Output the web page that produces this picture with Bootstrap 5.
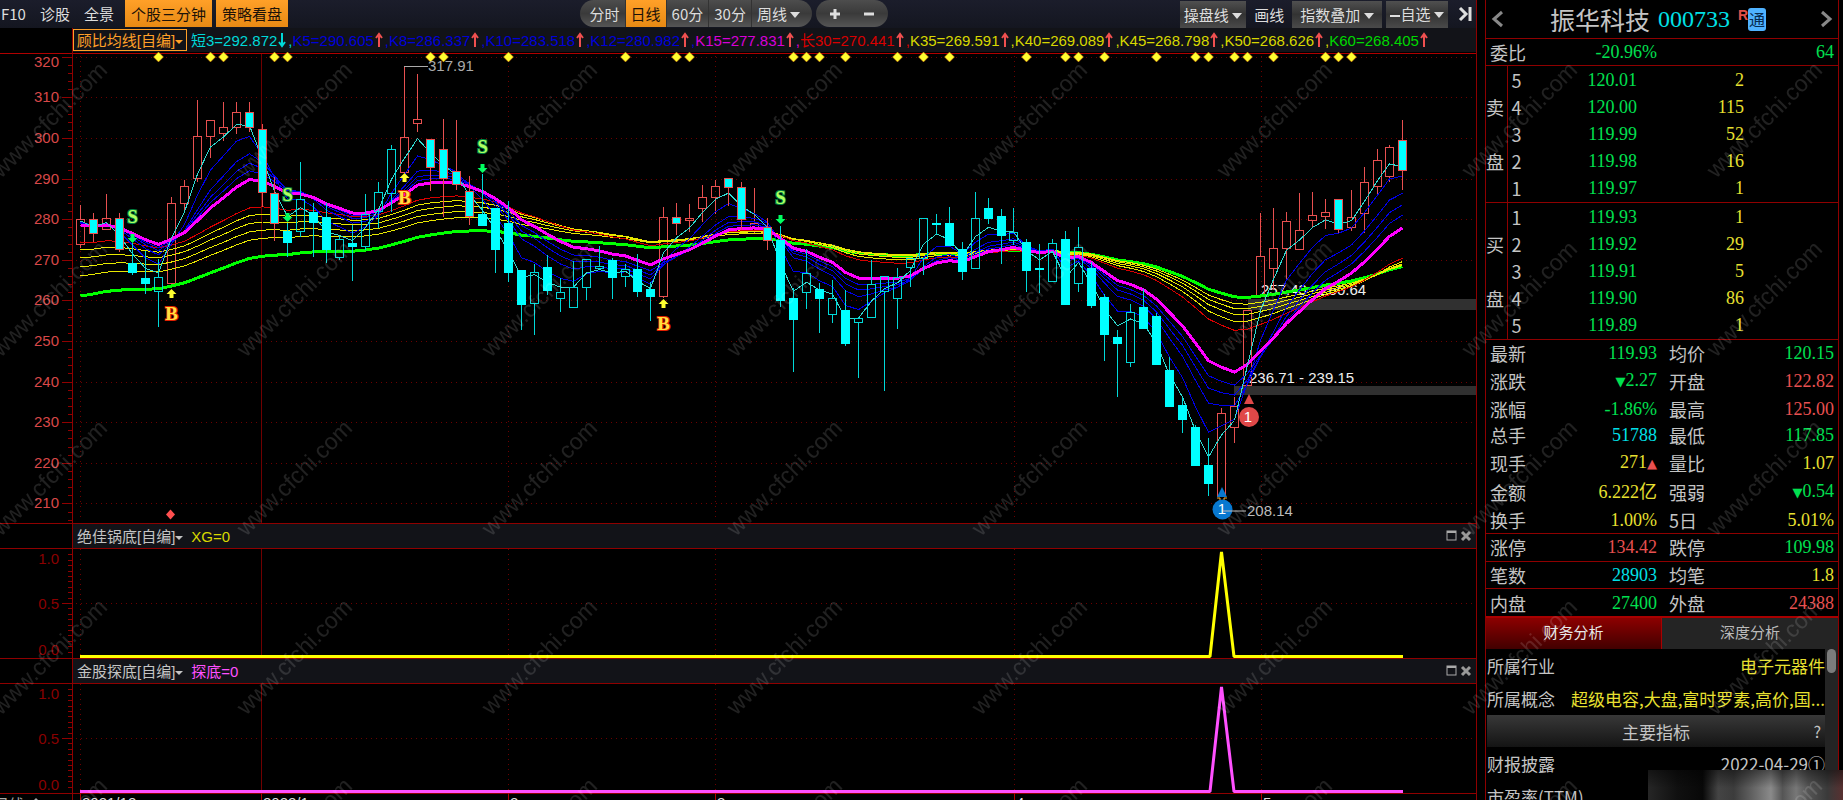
<!DOCTYPE html>
<html lang="zh-CN">
<head>
<meta charset="utf-8">
<meta name="viewport" content="width=device-width, initial-scale=1">
<title>振华科技 000733</title>
<link rel="stylesheet" href="https://cdn.jsdelivr.net/npm/bootstrap@5.3.0/dist/css/bootstrap.min.css">
<style>
:root{--line:#8f0000;--up:#e85050;--down:#00e050;--yel:#e8e030;--cy:#00e0e8;--txt:#c4c4c4}
body{background:#000;color:var(--txt);font-family:"Liberation Sans","Noto Sans CJK SC",sans-serif;font-size:15px;line-height:1;height:100vh;overflow:hidden}
button{font:inherit;line-height:1;color:inherit;background:none;border:0;padding:0;white-space:nowrap}
.toolbar{height:28px;background:linear-gradient(#1b1d2b,#141620);font-family:"Noto Sans CJK SC",sans-serif;color:#ddd}
.toolbar button{height:27px}
.hot{background:linear-gradient(#ffa028,#e88a14)!important;color:#1c1208}
.left-tools button{padding:0 7px}
.left-tools button:first-child{padding-left:1px}
.left-tools .hot{padding:0 6px}
.pill{background:linear-gradient(#4d4d4d,#3a3a3a 50%,#555);border-radius:14px;height:27px;overflow:hidden}
.pill button{padding:0 5px;border-right:1px solid #333}
.pill button:first-child{padding-left:10px}
.pill button:last-child{border:0;padding-right:12px}
.pill .step{padding:0 10px;border:0;line-height:0}
.pill .step:last-child{padding-right:12px}
.pill .step:first-child{padding-left:12px}
.grey{background:linear-gradient(#505050,#333 50%,#4a4a4a)}
.caret{display:inline-block;border:5px solid transparent;border-top:6px solid #ddd;border-bottom:0;vertical-align:2px}
.caret.sm{border-width:4px 4px 0;border-top-color:currentColor}
.axis-gap{width:73px;flex:none;border-right:1px solid var(--line)}
.legend-bar{height:24px}
.legend-strip{background:#121318;white-space:nowrap;overflow:hidden}
.formula{height:22px;width:114px;border:1px solid #ffa028!important;color:#ffa028}
.ar{width:11px;height:16px;flex:none}
.sub-bar{height:26px;border-top:1px solid var(--line);border-bottom:1px solid var(--line)}
.sub-strip{background:#121318}
.xg{color:#d8d800}.td{color:#ff50ff}
svg{display:block}
.chart{width:100%;height:auto}
.chart text{font-size:15px}
.chart .sig{font:700 19px "Liberation Serif",serif}
.chart polyline{shape-rendering:crispEdges}
.left-pane{border-right:1px solid var(--line);min-width:0;overflow:hidden}
.left-pane>*{flex-shrink:0}
.quote{width:358px;flex:none;padding-right:4px}
.quote-box{border:1px solid var(--line);border-width:0 1px;font-family:"Noto Sans CJK SC",sans-serif;font-size:18px;height:100%}
.quote-box>*{flex-shrink:0}
.quote-box>.more{flex:1 1 0}
.title-row{height:39px;border-bottom:1px solid var(--line)}
.stock-name{font-size:25px;line-height:1}
.num{font-family:"Liberation Serif",serif;font-size:18px}
.wb-row{height:27px;border-bottom:1px solid var(--line)}
.wb-left{width:167px}
.q{width:100%;border-collapse:collapse}
.q td,.q th{padding:0;line-height:18px;font-weight:400;white-space:nowrap}
.q .rule{border-top:1px solid var(--line)}
.book{height:137px;border-bottom:1px solid var(--line)}
.book .side{width:21px;border-right:1px solid var(--line)}
.book .lv{padding-left:4px}
.book .price{width:110px}.book .vol{width:107px}.book .rest{width:94px}
.stats{height:276px}
.stats .k1{width:60px}.stats .v1{width:111px}.stats .k2{padding-left:12px}
.up{color:var(--up)}.down{color:var(--down)}.yel{color:var(--yel)}.cy{color:var(--cy)}
.tri{font-size:13px;font-family:"DejaVu Sans",sans-serif}
.tabs{border-top:2px solid #a80000;height:33px;font-size:15px}
.tabs button{padding-bottom:4px}
.tabs .on{background:linear-gradient(#8c0000,#420000);color:#e8e8e8;border-right:1px solid #a80000}
.tabs .off{background:#242424;color:#bbb}
.info{font-size:17px;padding-left:1px}
.info .line{height:33px}
.info .band{height:32px;background:linear-gradient(#383838,#141414)}
.bar-track{width:13px;background:#242424}
.bar-thumb{width:9px;height:24px;border-radius:5px;background:#7c7c7c}
.rbadge{color:#e05048;font:700 14px "Liberation Sans",sans-serif}
.tong{width:18px;height:23px;border-radius:3px;background:#4fb2ff;color:#062a50;font-size:16px;line-height:22px}
.smudge{right:0;bottom:0;width:195px;height:30px;background:linear-gradient(rgba(0,0,0,.45),rgba(0,0,0,0) 60%),linear-gradient(90deg,#262626,#101010 15%,#080808 28%,#444 36%,#3c3c3c 44%,#5c5c5c 52%,#8a8a8a 63%,#555 69%,#777 76%,#555 82%,#3a3a3a 92%,#583030)}
.wm{inset:0;pointer-events:none}
</style>
</head>
<body>
<div class="d-flex h-100 position-relative">
<main class="left-pane flex-fill d-flex flex-column">
  <nav class="toolbar d-flex justify-content-between">
    <div class="left-tools d-flex">
      <button>F10</button><button>诊股</button><button>全景</button>
      <button class="hot ms-1 me-1">个股三分钟</button><button class="hot">策略看盘</button>
    </div>
    <div class="d-flex gap-1">
      <div class="pill d-flex"><button>分时</button><button class="hot">日线</button><button>60分</button><button>30分</button><button>周线 <span class="caret"></span></button></div>
      <div class="pill d-flex align-items-center justify-content-center">
        <button class="step" aria-label="放大"><svg width="14" height="14"><path d="M7 2v10M2 7h10" stroke="#ddd" stroke-width="3"/></svg></button>
        <button class="step" aria-label="缩小"><svg width="14" height="14"><path d="M2 7h10" stroke="#ddd" stroke-width="3"/></svg></button>
      </div>
    </div>
    <div class="d-flex align-items-center">
      <button class="grey px-1">操盘线 <span class="caret"></span></button>
      <button class="px-2">画线</button>
      <button class="grey px-2">指数叠加 <span class="caret"></span></button>
      <button class="grey px-1 ms-1 me-2"><svg class="d-inline-block" width="11" height="12"><path d="M0 6h10" stroke="#ddd" stroke-width="2"/></svg>自选 <span class="caret"></span></button>
      <svg width="20" height="18"><path d="M4 3l6 6-6 6M14 2v14" fill="none" stroke="#ddd" stroke-width="3"/></svg>
    </div>
  </nav>
  <div class="legend-bar d-flex">
    <div class="axis-gap"></div>
    <div class="legend-strip flex-fill d-flex align-items-center" id="legend"><button class="formula me-1">顾比均线[自编]<span class="caret sm"></span></button></div>
  </div>
  <svg class="chart" id="main" viewBox="0 52 1476 471"></svg>
  <div class="sub-bar d-flex">
    <div class="axis-gap"></div>
    <div class="sub-strip flex-fill d-flex align-items-center px-1"><button>绝佳锅底[自编]<span class="caret sm"></span></button><span class="ms-2 xg">XG=0</span><span class="ms-auto win"></span></div>
  </div>
  <svg class="chart sub" data-c="#ffff00" viewBox="0 549 1476 109"></svg>
  <div class="sub-bar d-flex">
    <div class="axis-gap"></div>
    <div class="sub-strip flex-fill d-flex align-items-center px-1"><button>金股探底[自编]<span class="caret sm"></span></button><span class="ms-2 td">探底=0</span><span class="ms-auto win"></span></div>
  </div>
  <svg class="chart sub" data-c="#ff50ff" viewBox="0 549 1476 109"></svg>
  <svg class="chart" id="foot" viewBox="0 793 1476 20"></svg>
</main>

<aside class="quote ms-2"><div class="quote-box d-flex flex-column">
  <header class="title-row d-flex align-items-center px-1">
    <svg width="14" height="18"><path d="M12 2L4 9l8 7" fill="none" stroke="#888" stroke-width="3"/></svg>
    <div class="d-flex align-items-center mx-auto pe-2">
      <span class="stock-name">振华科技</span><span class="num cy fs-4 ms-2 lh-1">000733</span><span class="rbadge ms-2 align-self-start">R</span><span class="tong text-center">通</span>
    </div>
    <svg width="14" height="18"><path d="M2 2l8 7-8 7" fill="none" stroke="#888" stroke-width="3"/></svg>
  </header>
  <div class="wb-row d-flex align-items-center px-1"><span class="wb-left d-flex justify-content-between">委比<span class="num down">-20.96%</span></span><span class="num down ms-auto">64</span></div>
  <table class="q book" id="sell"></table>
  <table class="q book" id="buy"></table>
  <table class="q stats" id="stats"></table>
  <div class="tabs d-flex"><button class="on w-50">财务分析</button><button class="off w-50">深度分析</button></div>
  <div class="more d-flex overflow-hidden">
    <div class="info flex-fill">
      <div class="line d-flex align-items-center justify-content-between"><span>所属行业</span><span class="yel">电子元器件</span></div>
      <div class="line d-flex align-items-center justify-content-between"><span>所属概念</span><span class="yel">超级电容,大盘,富时罗素,高价,国...</span></div>
      <div class="band d-flex align-items-center justify-content-center position-relative">主要指标<span class="position-absolute end-0 me-1 fs-6">?</span></div>
      <div class="line d-flex align-items-center justify-content-between"><span>财报披露</span><span>2022-04-29①</span></div>
      <div class="line d-flex align-items-center"><span>市盈率(TTM)</span></div>
    </div>
    <div class="bar-track d-flex justify-content-center"><div class="bar-thumb"></div></div>
  </div>
</div></aside>
<div class="smudge position-absolute"></div>
<svg class="wm position-absolute w-100 h-100" aria-hidden="true"><defs><pattern id="wmk" width="245" height="179" x="-20" y="5" patternUnits="userSpaceOnUse"><text x="21" y="174" transform="rotate(-45 21 174)" font-size="23" font-family="Liberation Sans, sans-serif" fill="#fff" fill-opacity=".13">www.cfchi.com</text></pattern></defs><rect y="54" width="100%" height="100%" fill="url(#wmk)"/></svg>
</div>

<script>
// Legend items: text, colour, direction
const legend=[['短3=292.872','#00d8d8',0],['K5=290.605','#0000d8',1],['K8=286.337','#0000d8',1],['K10=283.518','#0000d8',1],['K12=280.982','#0000d8',1],['K15=277.831','#d800d8',1],['长30=270.441','#d80000',1],['K35=269.591','#d8d800',1],['K40=269.089','#d8d800',1],['K45=268.798','#d8d800',1],['K50=268.626','#d8d800',1],['K60=268.405','#00d800',1]];
document.getElementById('legend').insertAdjacentHTML('beforeend',legend.map(([t,c,u],i)=>
 `<span class="d-flex align-items-center" style="color:${c}">${t}<svg class="ar" viewBox="0 0 11 16"><path d="${u?'M5 15V3M2 6l3-4 3 4':'M5 1v12M2 10l3 4 3-4'}" fill="none" stroke="${u?'#f05050':c}" stroke-width="2"/></svg>${i<11?',':''}</span>`).join(''));
document.querySelectorAll('.win').forEach(e=>e.innerHTML='<svg width="26" height="12"><rect x="1" y="1" width="9" height="9" fill="none" stroke="#aaa"/><path d="M1 2h9" stroke="#aaa" stroke-width="2"/><path d="M16 2l8 8M24 2l-8 8" stroke="#999" stroke-width="3"/></svg>');

// Candles: type, high, top, bottom, low. R red hollow, H cyan hollow, C cyan, M cyan with red edge
const K=`R205,219,244,248 M213,219,233,242 R194,218,229,229 M213,218,249,252 C243,263,272,275 C251,278,283,294 H259,277,291,327 R197,203,283,287 R180,186,203,213 R100,136,178,182 R120,120,136,158 R102,127,133,141 R102,112,127,134 M102,112,127,132 M124,129,192,207 M177,193,223,241 C223,231,242,257 H162,199,231,237 C203,212,222,257 C203,217,249,263 H236,239,257,260 C225,243,246,281 H194,214,246,250 H182,192,211,228 H145,149,193,212 R66,137,172,172 R74,119,123,132 M139,139,167,191 M119,149,178,217 M120,171,184,190 M176,191,216,225 C174,214,225,225 C208,208,249,273 C201,223,272,282 C270,270,304,330 H264,272,303,335 C255,267,290,295 H278,292,298,312 H261,287,307,307 H259,259,287,300 H246,266,268,269 C258,260,277,299 H264,269,276,287 C254,269,291,297 C282,289,296,321 R207,217,296,298 M203,217,223,235 R204,218,220,232 R185,197,208,222 R180,186,197,214 M178,178,187,206 M182,187,219,230 R188,223,227,233 M218,227,240,250 C226,240,300,307 C288,298,319,372 H249,273,292,309 C283,289,298,333 H280,298,314,323 C290,310,343,346 H317,318,322,378 H260,284,317,317 H276,276,291,391 H268,277,298,329 H258,258,267,287 H218,218,258,275 C214,223,224,235 C207,223,245,245 C242,249,271,280 H192,218,268,268 C198,208,218,224 C209,216,235,264 H208,232,240,245 C239,242,270,292 C244,268,269,293 H239,243,281,281 C231,239,304,305 H227,247,283,292 C262,268,305,308 C294,297,334,361 C330,337,343,397 H304,312,362,367 C289,307,328,328 C313,316,364,364 C357,370,406,406 C397,405,419,433 C425,427,465,465 C438,465,483,496 R408,413,496,497 R397,406,427,443 R310,310,385,385 R213,256,295,295 R208,248,268,290 R212,221,248,280 R193,230,249,249 R192,215,220,227 R199,212,216,229 M199,199,229,233 R190,217,227,231 R167,182,213,233 R149,160,186,195 R145,147,176,182 M120,140,170,190`
 .split(' ').map(s=>[s[0],...s.slice(1).split(',').map(Number)]);
const X=i=>Math.round(80+12.965*i)+.5, Y=v=>Math.round(138+(300-v)*4.06)+.5;
const DK='#8f0000', GR='#6c0000', vlines=[80,508,715,1014,1261];
let s='';
const ln=(x1,y1,x2,y2,c,e='')=>`<path d="M${x1} ${y1}L${x2} ${y2}" stroke="${c}" fill="none" ${e}/>`;
const dots='stroke-dasharray="1 4" ';
s+=ln(0,53.5,1476,53.5,'#b00000');
for(let v=210;v<=320;v+=10){const y=Y(v);s+=ln(76,y,1476,y,GR,dots)+ln(62,y,73,y,DK);
 s+=`<text x="59" y="${(v==320?y+10:y+5)-.5}" text-anchor="end" fill="#d84848">${v}</text>`;}
for(let v=204;v<320;v+=2)if(v%10)s+=ln(68,Y(v),73,Y(v),DK);
vlines.forEach(x=>s+=ln(x+.5,56,x+.5,520,GR,dots));
s+=ln(261.5,54,261.5,523,'#700000')+ln(72.5,52,72.5,523,DK);
s+='<path d="M1248 299h228v11h-228zM1234 386h242v9h-242z" fill="#303030"/>';
s+='<g fill="#eee"><text x="1261" y="295">257.43 - 260.64</text><text x="1249" y="383">236.71 - 239.15</text></g>';
K.forEach(([t,h,a,b,l],i)=>{if(t=='R'){const x=X(i);s+=ln(x,h,x,a,'#e85050')+ln(x,b,x,l,'#e85050')+`<rect x="${x-4}" y="${a+.5}" width="8" height="${Math.max(b-a,1)}" fill="none" stroke="#e85050"/>`}});
// Exponential averages run over the closes from each line's opening level
const close=K.map(k=>(k[0]=='R'||k[0]=='H')?k[2]:k[3]);
[[60,296,'#00ff00',3],[50,276,'#e8e800',1],[45,267,'#e8e800',1],[40,258,'#e8e800',1],[35,250,'#e8e800',1],[30,243,'#d80000',1],[12,224,'#0000e8',1],[10,223,'#0000e8',1],[8,223,'#0000e8',1],[5,222,'#0000e8',1],[15,225,'#ff00ff',3],[3,221,'#30d8d0',1]].forEach(([n,e,c,w])=>{
 const p=close.map((v,i)=>{if(i)e+=(v-e)*2/(n+1);return X(i)+','+e.toFixed(1)});
 s+=`<polyline points="${p.join(' ')}" fill="none" stroke="${c}" stroke-width="${w}"/>`});
K.forEach(([t,h,a,b,l],i)=>{if(t=='R')return;const x=X(i),c=t=='M'?'#e85050':'#00d8d8';
 s+=ln(x,h,x,a,c)+ln(x,b,x,l,c)+`<rect x="${x-4}" y="${a+.5}" width="8" height="${Math.max(b-a,1)}" fill="${t=='H'?'none':'#00ffff'}" stroke="${t=='C'?'#00ffff':c}"/>`});
[6,10,11,15,16,27,28,33,42,46,47,55,56,57,59,63,65,67,73,76,77,79,83,86,87,89,90,92,96,97,98].forEach(i=>{const x=X(i);s+=`<path d="M${x-5} 57l5-5 5 5-5 5z" fill="#ffff30" stroke="#c05000" stroke-width=".5"/>`});
s+='<path d="M166 514.500l4.500-5 4.500 5-4.500 5z" fill="#ff5050"/>';
const mk=(t,i,ty,ay)=>{const x=X(i),S=t=='S',f=S?'#00ff60':'#ffff30';
 s+=`<path d="${S?`M${x-2} ${ay-4}h4v4h3l-5 5-5-5h3z`:`M${x-2} ${ay+5}h4v-4h3l-5-5-5 5h3z`}" fill="${f}"/><text class="sig" x="${x}" y="${ty+6}" text-anchor="middle" fill="${S?'#b0ff60':'#ffe040'}" stroke="${S?'#008040':'#e02000'}" stroke-width="2" paint-order="stroke">${t}</text>`};
mk('S',4,217,238);mk('S',16,195,217);mk('S',31,147,168);mk('S',54,198,219);
mk('B',7,314,293);mk('B',25,198,177);mk('B',45,324,303);
s+=ln(404,66.5,428,66.5,'#aaa')+'<text x="428" y="71" fill="#aaa">317.91</text>';
s+='<path d="M1217 498h3v3h4v-3h3" stroke="#ffb030" fill="none"/><path d="M1222 487l5 10h-10z" fill="#0878d0"/><circle cx="1222.500" cy="509.500" r="10" fill="#0878d0"/><path d="M1249 394l5 10h-10z" fill="#e04848"/><circle cx="1249" cy="417" r="10" fill="#e04848"/><g fill="#fff" text-anchor="middle"><text x="1222" y="514">1</text><text x="1248" y="422">1</text></g>';
s+=ln(1223,511,1246,511,'#bbb')+'<text x="1247" y="516" fill="#bbb">208.14</text>';
document.getElementById('main').innerHTML=s;

document.querySelectorAll('.sub').forEach(el=>{
 const c=el.dataset.c;let o=ln(72.5,549,72.5,658,DK)+ln(76,603.5,1476,603.5,GR,dots)+ln(62,603.5,73,603.5,DK)+ln(261.5,549,261.5,658,'#700000');
 vlines.forEach(x=>o+=ln(x+.5,549,x+.5,658,GR,dots));
 for(let i=1;i<20;i++)if(i!=10){const y=Math.round(657-i*5.4)+.5;o+=ln(68,y,73,y,DK)}
 o+='<g text-anchor="end" fill="#8a0000"><text x="59" y="564">1.0</text><text x="59" y="609">0.5</text><text x="59" y="655">0.0</text></g>';
 o+=`<path d="M80 656.500H1210L1221.500 552L1234 656.500H1403" fill="none" stroke="${c}" stroke-width="3" stroke-linejoin="bevel"/>`;
 el.innerHTML=o});
let f=ln(0,793.5,1476,793.5,DK)+ln(72.5,793,72.5,813,DK);
[80,261,508,715,1014,1261].forEach((x,i)=>{f+=ln(x+.5,793,x+.5,813,'#b00000')+`<text x="${x+2}" y="808" fill="#ddd">${['2021/12','2022/1','2','3','4','5'][i]}</text>`});
f+='<text x="-6" y="810" fill="#aaa">日线</text><path d="M32 802l4-4 4 4z" fill="#aaa"/>';
document.getElementById('foot').innerHTML=f;

// Order book and quote figures
const book=(id,side,rows)=>document.getElementById(id).innerHTML=rows.map(([n,p,v],i)=>
 `<tr><th class="side">${i==1?side:i==3?'盘':''}</th><td class="lv">${n}</td><td class="price num down text-end">${p}</td><td class="vol num yel text-end">${v}</td><td class="rest"></td></tr>`).join('');
book('sell','卖',[[5,'120.01',2],[4,'120.00',115],[3,'119.99',52],[2,'119.98',16],[1,'119.97',1]]);
book('buy','买',[[1,'119.93',1],[2,'119.92',29],[3,'119.91',5],[4,'119.90',86],[5,'119.89',1]]);
const D='<span class="tri">▼</span>';
document.getElementById('stats').innerHTML=[
['最新','119.93','down','均价','120.15','down'],['涨跌',D+'2.27','down','开盘','122.82','up'],['涨幅','-1.86%','down','最高','125.00','up'],
['总手','51788','cy','最低','117.85','down'],['现手','271<span class="tri up">▲</span>','yel','量比','1.07','yel'],['金额','6.222亿','yel','强弱',D+'0.54','down'],
['换手','1.00%','yel','5日','5.01%','yel'],['涨停','134.42','up','跌停','109.98','down'],['笔数','28903','cy','均笔','1.8','yel'],['内盘','27400','down','外盘','24388','up']]
.map((r,i)=>`<tr class="${i>6?'rule':''}"><th class="k1 ps-1">${r[0]}</th><td class="v1 num text-end ${r[2]}">${r[1]}</td><th class="k2">${r[3]}</th><td class="num text-end pe-1 ${r[5]}">${r[4]}</td></tr>`).join('');
</script>
<script src="https://cdn.jsdelivr.net/npm/bootstrap@5.3.0/dist/js/bootstrap.bundle.min.js"></script>
</body>
</html>
